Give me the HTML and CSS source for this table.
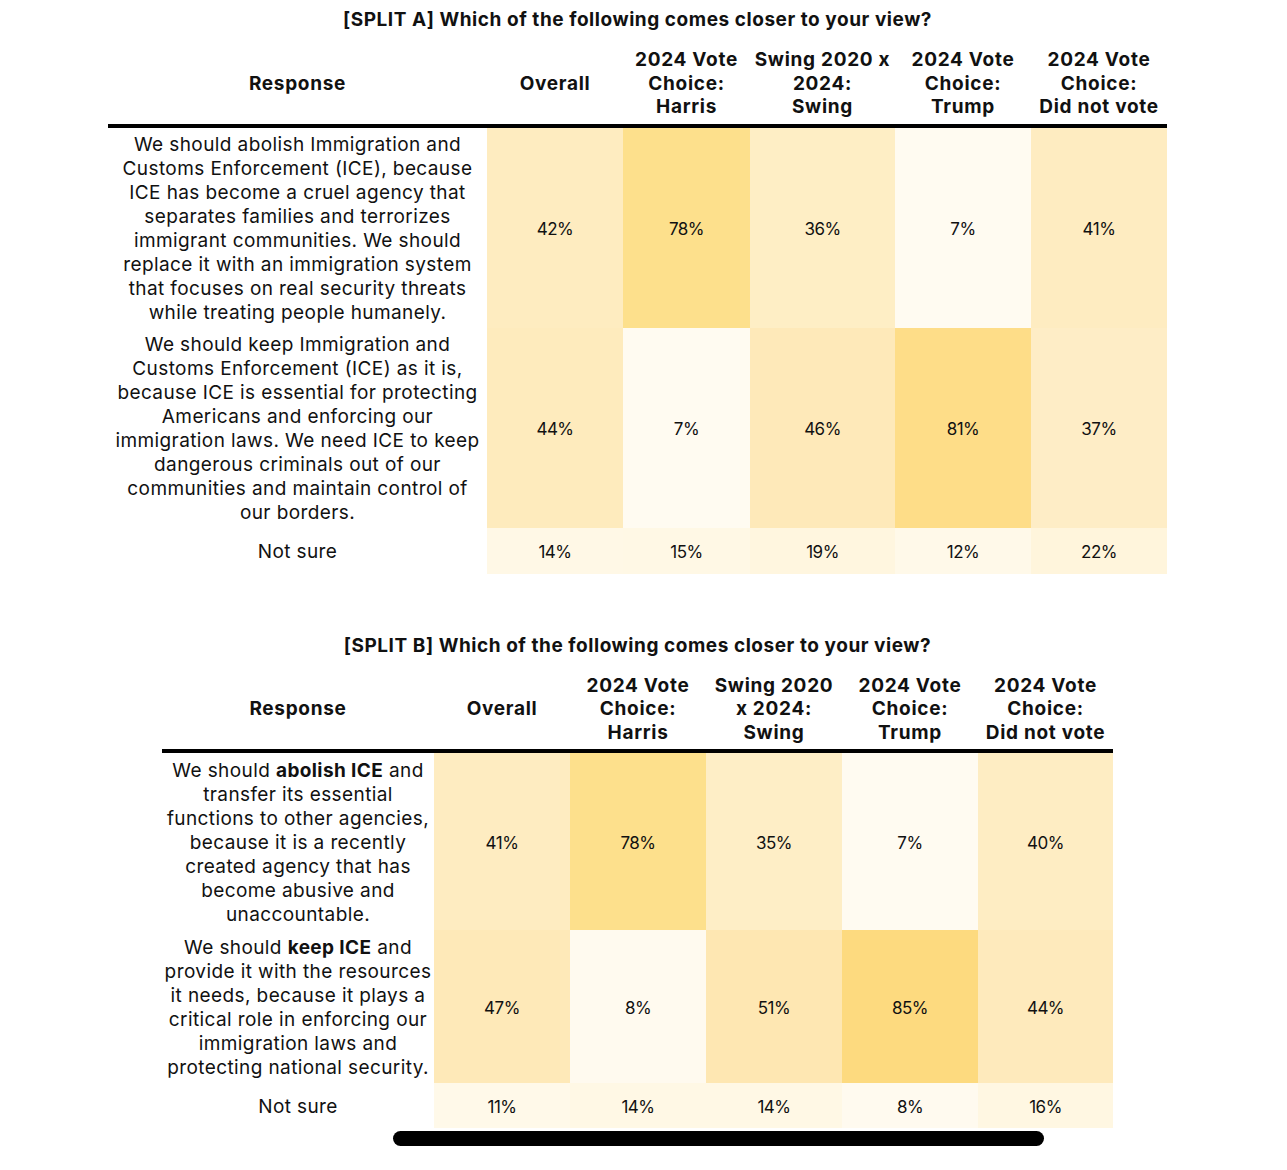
FILE: index.html
```html
<!DOCTYPE html>
<html>
<head>
<meta charset="utf-8">
<link rel="stylesheet" href="styles.css">
</head>
<body>
<div class="page">
  <section class="block block-a">
    <h2 class="title">[SPLIT A] Which of the following comes closer to your view?</h2>
    <table class="grid grid-a">
      <colgroup>
        <col class="c-resp"><col class="c136"><col class="c127"><col class="c145"><col class="c136"><col class="c136">
      </colgroup>
      <thead>
        <tr>
          <th>Response</th>
          <th>Overall</th>
          <th>2024 Vote<br>Choice:<br>Harris</th>
          <th>Swing 2020 x<br>2024:<br>Swing</th>
          <th>2024 Vote<br>Choice:<br>Trump</th>
          <th>2024 Vote<br>Choice:<br>Did not vote</th>
        </tr>
      </thead>
      <tbody>
        <tr class="r200">
          <td class="resp">We should abolish Immigration and<br>Customs Enforcement (ICE), because<br>ICE has become a cruel agency that<br>separates families and terrorizes<br>immigrant communities. We should<br>replace it with an immigration system<br>that focuses on real security threats<br>while treating people humanely.</td>
          <td class="val" style="background:#feecc0">42%</td>
          <td class="val" style="background:#fde08c">78%</td>
          <td class="val" style="background:#feeec5">36%</td>
          <td class="val" style="background:#fffbf1">7%</td>
          <td class="val" style="background:#feecc1">41%</td>
        </tr>
        <tr class="r200">
          <td class="resp">We should keep Immigration and<br>Customs Enforcement (ICE) as it is,<br>because ICE is essential for protecting<br>Americans and enforcing our<br>immigration laws. We need ICE to keep<br>dangerous criminals out of our<br>communities and maintain control of<br>our borders.</td>
          <td class="val" style="background:#feebbd">44%</td>
          <td class="val" style="background:#fffbf1">7%</td>
          <td class="val" style="background:#fee9b9">46%</td>
          <td class="val" style="background:#fedd88">81%</td>
          <td class="val" style="background:#feedc6">37%</td>
        </tr>
        <tr class="rns">
          <td class="resp">Not sure</td>
          <td class="val" style="background:#fff8e6">14%</td>
          <td class="val" style="background:#fff8e5">15%</td>
          <td class="val" style="background:#fff6df">19%</td>
          <td class="val" style="background:#fff9e9">12%</td>
          <td class="val" style="background:#fff5dc">22%</td>
        </tr>
      </tbody>
    </table>
  </section>

  <section class="block block-b">
    <h2 class="title">[SPLIT B] Which of the following comes closer to your view?</h2>
    <table class="grid grid-b">
      <colgroup>
        <col class="c-respb"><col class="c136"><col class="c136"><col class="c136"><col class="c136"><col class="c135">
      </colgroup>
      <thead>
        <tr>
          <th>Response</th>
          <th>Overall</th>
          <th>2024 Vote<br>Choice:<br>Harris</th>
          <th>Swing 2020<br>x 2024:<br>Swing</th>
          <th>2024 Vote<br>Choice:<br>Trump</th>
          <th>2024 Vote<br>Choice:<br>Did not vote</th>
        </tr>
      </thead>
      <tbody>
        <tr class="r177">
          <td class="resp">We should <b>abolish ICE</b> and<br>transfer its essential<br>functions to other agencies,<br>because it is a recently<br>created agency that has<br>become abusive and<br>unaccountable.</td>
          <td class="val" style="background:#feecc1">41%</td>
          <td class="val" style="background:#fde08c">78%</td>
          <td class="val" style="background:#feeec6">35%</td>
          <td class="val" style="background:#fffbf1">7%</td>
          <td class="val" style="background:#feedc3">40%</td>
        </tr>
        <tr class="r153">
          <td class="resp">We should <b>keep ICE</b> and<br>provide it with the resources<br>it needs, because it plays a<br>critical role in enforcing our<br>immigration laws and<br>protecting national security.</td>
          <td class="val" style="background:#fee9b8">47%</td>
          <td class="val" style="background:#fffaef">8%</td>
          <td class="val" style="background:#fee7b2">51%</td>
          <td class="val" style="background:#fdda7f">85%</td>
          <td class="val" style="background:#feeabc">44%</td>
        </tr>
        <tr class="rns">
          <td class="resp">Not sure</td>
          <td class="val" style="background:#fff9e9">11%</td>
          <td class="val" style="background:#fff8e5">14%</td>
          <td class="val" style="background:#fff8e5">14%</td>
          <td class="val" style="background:#fffaef">8%</td>
          <td class="val" style="background:#fff7e2">16%</td>
        </tr>
      </tbody>
    </table>
    <div class="scrollbar"></div>
  </section>
</div>
</body>
</html>
```

FILE: styles.css
```css
html, body {
  margin: 0;
  padding: 0;
  background: #ffffff;
}
body {
  font-family: "Inter", "Roboto", "Liberation Sans", sans-serif;
  color: #111111;
}
.page {
  width: 1275px;
}
.block {
  display: flex;
  flex-direction: column;
  align-items: center;
}
.block-a {
  padding-top: 8px;
}
.block-b {
  padding-top: 60px;
}
.title {
  margin: 0;
  font-size: 19px;
  line-height: 24px;
  font-weight: 700;
  letter-spacing: 0.55px;
  color: #111111;
}
.grid {
  border-collapse: collapse;
  table-layout: fixed;
  margin-top: 13px;
}
.grid-a { width: 1059px; }
.grid-b { width: 951px; }
.c-resp { width: 379px; }
.c-respb { width: 272px; }
.c136 { width: 136px; }
.c127 { width: 127px; }
.c145 { width: 145px; }
.c135 { width: 135px; }

.grid th {
  font-size: 19px;
  line-height: 23.5px;
  font-weight: 700;
  letter-spacing: 0.7px;
  color: #111111;
  text-align: center;
  vertical-align: middle;
  padding: 3px 0 5px;
  border-bottom: 4px solid #000000;
  white-space: nowrap;
}
.grid td {
  padding: 2px 0 0;
  text-align: center;
  vertical-align: middle;
}
.grid .resp {
  font-size: 19px;
  line-height: 24px;
  letter-spacing: 0.4px;
  color: #111111;
  white-space: nowrap;
}
.grid .resp b {
  font-weight: 700;
}
.grid .val {
  font-size: 17px;
  letter-spacing: -0.5px;
  color: #111111;
}
.r200 td { height: 198px; }
.r177 td { height: 175px; }
.r153 td { height: 151px; }
.rns td { height: 44px; }
.grid-b .rns td { height: 43px; }

.scrollbar {
  align-self: flex-start;
  width: 651px;
  height: 15px;
  border-radius: 8px;
  background: #000000;
  margin-top: 3px;
  margin-left: 393px;
}
```
